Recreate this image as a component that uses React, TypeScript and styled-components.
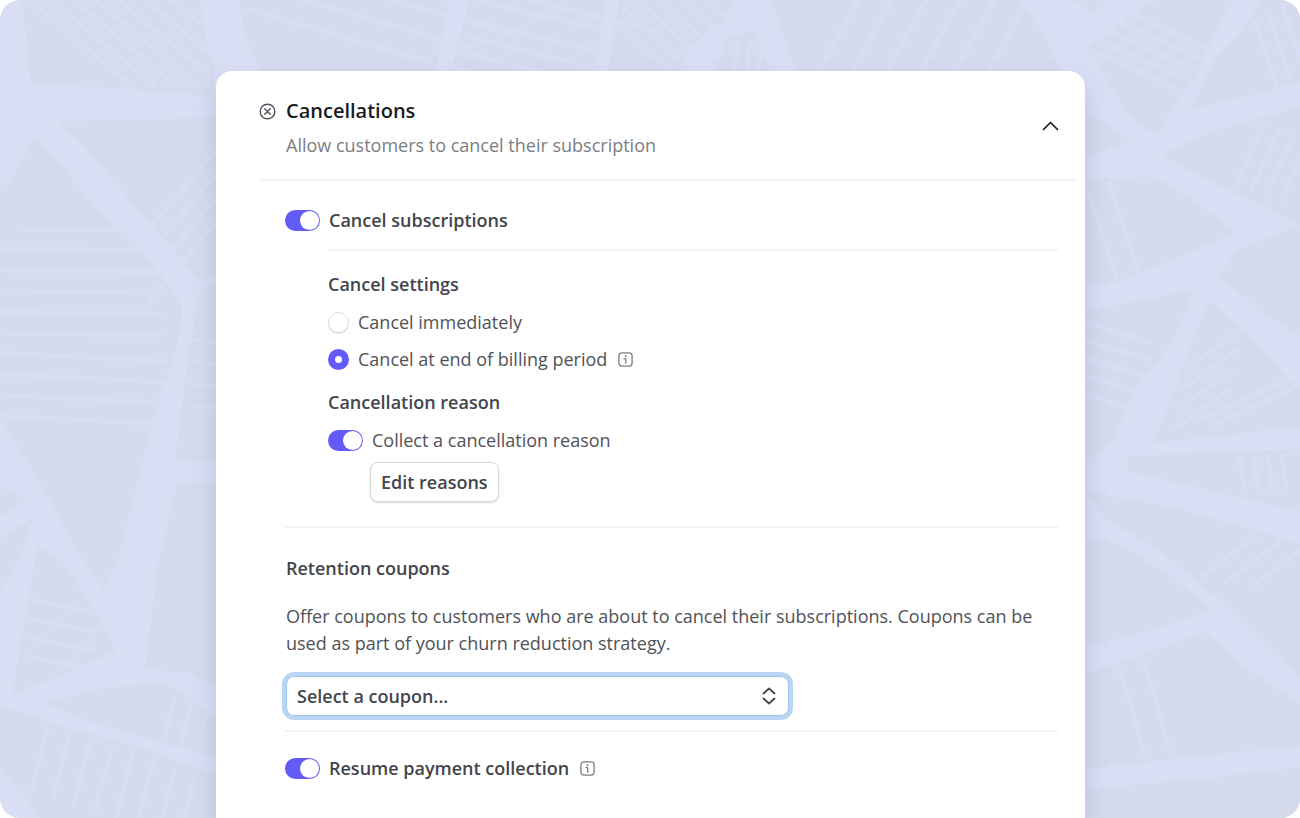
import React, { useState } from "react";
import styled, { createGlobalStyle } from "styled-components";

const GlobalStyle = createGlobalStyle`
  *, *::before, *::after { box-sizing: border-box; }
  body { margin: 0; background: #fff; }
  body, button, select, input {
    font-family: "Open Sans", "Noto Sans", sans-serif;
  }
`;

const color = {
  cell: "#d5daed",
  band: "#d9def4",
  accent: "#635bf5",
  ink: "#1a1b22",
  text: "#43454c",
  body: "#505257",
  muted: "#7b7e84",
  line: "#f3f3f4",
};

const Page = styled.main`
  position: relative;
  display: flex;
  min-height: 100vh;
  padding: 71px 215px 0 216px;
  border-radius: 20px;
  overflow: hidden;
  background: ${color.band};
  @media (max-width: 1000px) {
    padding: 40px 24px 0;
  }
`;

const Backdrop = styled.svg`
  position: absolute;
  inset: 0;
  width: 100%;
  height: 100%;
`;

const Card = styled.section`
  position: relative;
  flex: 1;
  min-width: 0;
  padding-bottom: 36px;
  border-radius: 16px 16px 0 0;
  background: #fff;
  box-shadow: 0 12px 24px rgba(80, 86, 150, 0.2);
`;

const Header = styled.header`
  display: flex;
  align-items: center;
  justify-content: space-between;
  margin: 0 10px 0 45px;
  padding: 26px 16px 20px 0;
  border-bottom: 2px solid ${color.line};
`;

const Heading = styled.div`
  display: grid;
  grid-template-columns: 15px 1fr;
  column-gap: 10px;
  row-gap: 7px;
  align-items: center;
  & > svg { justify-self: end; }
`;

const Title = styled.h1`
  margin: 0;
  font-size: 20px;
  line-height: 28px;
  font-weight: 600;
  color: ${color.ink};
`;

const Subtitle = styled.p`
  grid-column: 2;
  margin: 0;
  font-size: 18px;
  line-height: 27px;
  color: ${color.muted};
`;

const IconButton = styled.button`
  display: flex;
  padding: 0;
  border: 0;
  background: none;
  color: ${color.ink};
  cursor: pointer;
`;

const CollapseButton = styled(IconButton)`
  padding-bottom: 4px;
`;

const Body = styled.div`
  padding: 26px 27px 0 69px;
`;

const Row = styled.div`
  display: flex;
  align-items: center;
  gap: 11px;
`;

const Label = styled.label<{ $strong?: boolean }>`
  display: flex;
  align-items: center;
  gap: 9px;
  font-size: 18px;
  line-height: 27px;
  font-weight: ${(p) => (p.$strong ? 600 : 400)};
  color: ${(p) => (p.$strong ? color.text : color.body)};
  cursor: pointer;
`;

const Switch = styled.input.attrs({ type: "checkbox", role: "switch" })`
  appearance: none;
  flex: none;
  display: flex;
  width: 35px;
  height: 21px;
  margin: 0;
  padding: 1px;
  border-radius: 11px;
  background: #c0c8d2;
  cursor: pointer;
  &::before {
    content: "";
    width: 19px;
    height: 19px;
    border-radius: 50%;
    background: #fff;
  }
  &:checked {
    justify-content: flex-end;
    background: ${color.accent};
  }
`;

const Radio = styled.input.attrs({ type: "radio" })`
  appearance: none;
  flex: none;
  width: 21px;
  height: 21px;
  margin: 0;
  border: 1px solid #dcdee2;
  border-radius: 50%;
  background: #fff;
  box-shadow: 0 1px 1px rgba(0, 0, 0, 0.12);
  cursor: pointer;
  &:checked {
    border: 7px solid ${color.accent};
    box-shadow: none;
  }
`;

const Nested = styled.div`
  margin: 15px 0 24px 43px;
  padding-top: 20px;
  border-top: 2px solid ${color.line};
`;

const Group = styled.fieldset<{ $gap: number }>`
  display: flex;
  flex-direction: column;
  gap: ${(p) => p.$gap}px;
  margin: 0;
  padding: 0;
  border: 0;
  & + & {
    margin-top: 16px;
  }
`;

const GroupTitle = styled.legend`
  margin-bottom: 11px;
  padding: 0;
  font-size: 18px;
  line-height: 27px;
  font-weight: 600;
  color: ${color.text};
`;

const Button = styled.button`
  align-self: flex-start;
  height: 40px;
  margin-left: 42px;
  padding: 0 10px;
  border: 1px solid #d8dade;
  border-radius: 8px;
  background: #fff;
  box-shadow: 0 1px 2px rgba(0, 0, 0, 0.14);
  font-size: 18px;
  font-weight: 600;
  color: ${color.text};
  cursor: pointer;
`;

const Section = styled.section`
  padding: 27px 0 14px 1px;
  border-top: 2px solid ${color.line};
  border-bottom: 2px solid ${color.line};
`;

const SectionTitle = styled.h2`
  margin: 0 0 21px;
  font-size: 18px;
  line-height: 27px;
  font-weight: 600;
  color: ${color.text};
`;

const Text = styled.p`
  margin: 0 0 19px;
  font-size: 18px;
  line-height: 27px;
  color: ${color.body};
`;

const SelectWrap = styled.div`
  display: grid;
  align-items: center;
  width: 503px;
  max-width: 100%;
  & > * { grid-area: 1 / 1; }
  & > svg {
    justify-self: end;
    margin-right: 13px;
    pointer-events: none;
  }
`;

const Select = styled.select`
  appearance: none;
  width: 100%;
  height: 40px;
  padding: 0 40px 0 10px;
  border: 1px solid #a3c5ea;
  border-radius: 8px;
  background: #fff;
  box-shadow: 0 0 0 4px #b9d7f1;
  outline: none;
  font-size: 18px;
  font-weight: 600;
  color: ${color.text};
`;

const Footer = styled.div`
  padding-top: 23px;
`;

/* Cells between the light bands of the backdrop. */
const cells = [
  "23,0 198,0 206,40 214,71 212,95 130,88 32,83",
  "60,122 216,119 216,275 200,280 150,222 85,145",
  "35,138 60,165 100,215 125,235 155,268 182,308 175,350 160,390 148,435 118,555 103,588 72,540 40,480 8,430 0,415 0,190 12,180",
  "0,487 25,500 0,515",
  "0,540 32,520 20,555 0,590",
  "38,547 60,560 90,605 115,650 60,675 13,692 30,600",
  "202,290 216,285 216,461 176,461 190,350",
  "178,483 216,483 216,687 190,672 160,670 146,665 160,560",
  "48,703 100,690 165,683 190,700 216,722 216,757 150,738 80,717",
  "0,708 30,715 60,727 110,740 160,755 216,777 216,818 42,818 28,800 0,765",
  "240,0 447,0 434,80 264,80 245,30",
  "470,0 605,0 592,80 450,80",
  "620,0 732,0 725,18 690,45 672,80 608,80",
  "728,40 755,30 772,80 712,80",
  "772,0 1020,0 1045,40 1064,80 800,80",
  "1075,0 1105,0 1095,13",
  "1150,4 1160,0 1232,0 1215,30 1195,75 1170,110 1157,135 1130,115 1105,75 1090,48 1120,24",
  "1262,0 1300,0 1300,80 1260,92 1194,107 1215,60 1245,30",
  "1164,155 1210,133 1300,108 1300,225 1265,205 1230,190 1190,170",
  "1085,112 1130,142 1085,155",
  "1085,180 1155,178 1195,203 1235,232 1180,255 1120,280 1085,285",
  "1300,228 1300,335 1260,310 1220,275 1240,250 1275,236",
  "1085,312 1150,300 1193,290 1170,345 1135,385 1112,440 1085,462",
  "1210,302 1250,340 1300,392 1300,426 1155,442 1172,400 1190,350",
  "1128,457 1300,450 1300,510 1220,492 1128,470",
  "1085,492 1180,510 1300,545 1300,675 1260,640 1215,595 1160,550 1110,520",
  "1085,540 1120,545 1175,580 1210,610 1140,632 1085,646",
  "1085,674 1130,660 1205,633 1240,665 1300,705 1300,745 1200,755 1085,768",
  "1085,790 1200,780 1300,768 1300,818 1085,818",
];

type Hatch = { from: [number, number, number, number]; step: [number, number]; count: number };

const hatches: Hatch[] = [
  { from: [30, 0, 132, 86], step: [22, 0], count: 4 },
  { from: [118, 0, 204, 70], step: [22, -4], count: 3 },
  { from: [0, 249, 160, 251], step: [0, 21], count: 5 },
  { from: [22, 229, 118, 230], step: [0, 1], count: 1 },
  { from: [0, 353, 164, 361], step: [0, 21], count: 4 },
  { from: [216, 150, 150, 228], step: [0, 24], count: 4 },
  { from: [30, 600, 92, 612], step: [0, 19], count: 4 },
  { from: [48, 728, 32, 790], step: [21, 7], count: 8 },
  { from: [174, 698, 164, 738], step: [16, 8], count: 3 },
  { from: [195, 340, 216, 342], step: [0, 22], count: 4 },
  { from: [250, 10, 430, 62], step: [40, -14], count: 4 },
  { from: [470, 20, 600, 52], step: [-5, 16], count: 4 },
  { from: [480, 0, 602, 30], step: [50, 0], count: 2 },
  { from: [612, 18, 668, 70], step: [12, -10], count: 6 },
  { from: [738, 42, 734, 78], step: [12, 0], count: 3 },
  { from: [858, 0, 816, 76], step: [34, 0], count: 6 },
  { from: [1095, 52, 1175, 88], step: [8, -10], count: 5 },
  { from: [1254, 20, 1276, 84], step: [14, -8], count: 3 },
  { from: [1264, 125, 1236, 185], step: [15, 5], count: 4 },
  { from: [1088, 190, 1116, 276], step: [22, -6], count: 2 },
  { from: [1085, 322, 1150, 342], step: [0, 18], count: 5 },
  { from: [1188, 368, 1240, 330], step: [-4, 20], count: 4 },
  { from: [1200, 420, 1290, 378], step: [16, 4], count: 2 },
  { from: [1240, 456, 1244, 490], step: [14, 0], count: 4 },
  { from: [1202, 576, 1256, 536], step: [24, 6], count: 3 },
  { from: [1120, 670, 1144, 752], step: [24, -8], count: 2 },
];

const CellPattern = () => (
  <Backdrop viewBox="0 0 1300 818" preserveAspectRatio="xMidYMid slice" aria-hidden="true">
    <g fill={color.cell} stroke={color.cell} strokeWidth="2" strokeLinejoin="round">
      {cells.map((points) => (
        <polygon key={points} points={points} />
      ))}
    </g>
    <g stroke={color.band} strokeWidth="5" strokeLinecap="round" opacity="0.8">
      {hatches.flatMap(({ from: [x1, y1, x2, y2], step: [dx, dy], count }, h) =>
        Array.from({ length: count }, (_, i) => (
          <line key={`${h}-${i}`} x1={x1 + dx * i} y1={y1 + dy * i} x2={x2 + dx * i} y2={y2 + dy * i} />
        ))
      )}
    </g>
  </Backdrop>
);

const CancelIcon = () => (
  <svg width="17" height="17" viewBox="0 0 17 17" fill="none" stroke="#50535b" strokeWidth="1.4" strokeLinecap="round" aria-hidden="true">
    <circle cx="8.5" cy="8.5" r="7.3" />
    <path d="M5.7 5.7l5.6 5.6M11.3 5.7l-5.6 5.6" />
  </svg>
);

const ChevronIcon = () => (
  <svg width="17" height="10" viewBox="0 0 17 10" fill="none" stroke="currentColor" strokeWidth="1.7" strokeLinecap="round" strokeLinejoin="round" aria-hidden="true">
    <path d="M1.5 8.5l7-7 7 7" />
  </svg>
);

const SortIcon = () => (
  <svg width="14" height="18" viewBox="0 0 14 18" fill="none" stroke="#43454c" strokeWidth="1.8" strokeLinecap="round" strokeLinejoin="round" aria-hidden="true">
    <path d="M1.5 6.5l5.5-5 5.5 5M1.5 11.5l5.5 5 5.5-5" />
  </svg>
);

const InfoIcon = () => (
  <svg width="15" height="15" viewBox="0 0 15 15" fill="none" stroke="#7b7e84" strokeWidth="1.3" aria-hidden="true">
    <rect x="0.9" y="0.9" width="13.2" height="13.2" rx="3" />
    <path d="M6 6.6h1.7v4.6" strokeLinecap="round" strokeLinejoin="round" />
    <circle cx="7.5" cy="4.2" r="0.9" fill="#7b7e84" stroke="none" />
  </svg>
);

const InfoButton = ({ label }: { label: string }) => (
  <IconButton type="button" aria-label={label}>
    <InfoIcon />
  </IconButton>
);

export default function App() {
  const [timing, setTiming] = useState("period");
  const [open, setOpen] = useState(true);

  return (
    <>
      <GlobalStyle />
      <Page>
        <CellPattern />
        <Card>
          <Header>
            <Heading>
              <CancelIcon />
              <Title>Cancellations</Title>
              <Subtitle>Allow customers to cancel their subscription</Subtitle>
            </Heading>
            <CollapseButton type="button" aria-label="Toggle section" aria-expanded={open} onClick={() => setOpen(!open)}>
              <ChevronIcon />
            </CollapseButton>
          </Header>
          {open && (
            <Body>
              <Row>
                <Label $strong>
                  <Switch defaultChecked />
                  Cancel subscriptions
                </Label>
              </Row>
              <Nested>
                <Group $gap={10}>
                  <GroupTitle>Cancel settings</GroupTitle>
                  <Row>
                    <Label>
                      <Radio name="timing" checked={timing === "now"} onChange={() => setTiming("now")} />
                      Cancel immediately
                    </Label>
                  </Row>
                  <Row>
                    <Label>
                      <Radio name="timing" checked={timing === "period"} onChange={() => setTiming("period")} />
                      Cancel at end of billing period
                    </Label>
                    <InfoButton label="About the billing period" />
                  </Row>
                </Group>
                <Group $gap={8}>
                  <GroupTitle>Cancellation reason</GroupTitle>
                  <Row>
                    <Label>
                      <Switch defaultChecked />
                      Collect a cancellation reason
                    </Label>
                  </Row>
                  <Button type="button">Edit reasons</Button>
                </Group>
              </Nested>
              <Section>
                <SectionTitle id="coupons">Retention coupons</SectionTitle>
                <Text>
                  Offer coupons to customers who are about to cancel their subscriptions. Coupons can be used as part
                  of your churn reduction strategy.
                </Text>
                <SelectWrap>
                  <Select aria-labelledby="coupons" defaultValue="">
                    <option value="">Select a coupon...</option>
                  </Select>
                  <SortIcon />
                </SelectWrap>
              </Section>
              <Footer>
                <Row>
                  <Label $strong>
                    <Switch defaultChecked />
                    Resume payment collection
                  </Label>
                  <InfoButton label="About payment collection" />
                </Row>
              </Footer>
            </Body>
          )}
        </Card>
      </Page>
    </>
  );
}
